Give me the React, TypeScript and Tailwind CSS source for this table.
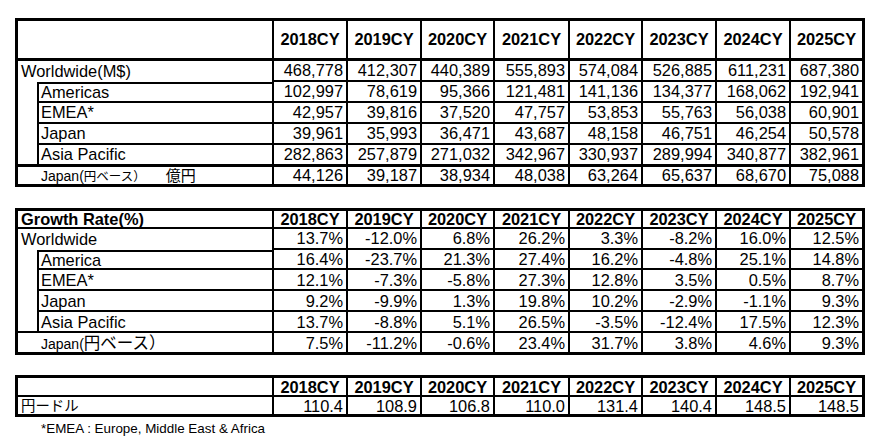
import React from "react";

type Row = {
    label: React.ReactNode;
    kind: "top" | "sub" | "yen" | "plain";
    values: string[];
    h: string;
    sep: string;
    labelTop?: boolean;
    indentB?: boolean;
};

const years = ["2018CY", "2019CY", "2020CY", "2021CY", "2022CY", "2023CY", "2024CY", "2025CY"];
const colW = ["w-[21px]", "w-[235px]", "w-[74px]", "w-[74px]", "w-[73px]", "w-[75px]", "w-[73px]", "w-[74px]", "w-[74px]", "w-[71px]"];

const sales: Row[] = [
    { label: "Worldwide(M$)", kind: "top", values: ["468,778", "412,307", "440,389", "555,893", "574,084", "526,885", "611,231", "687,380"], h: "h-[21px]", sep: "border-b-2" },
    { label: "Americas", kind: "sub", labelTop: true, values: ["102,997", "78,619", "95,366", "121,481", "141,136", "134,377", "168,062", "192,941"], h: "h-[21px]", sep: "border-b-2" },
    { label: "EMEA*", kind: "sub", values: ["42,957", "39,816", "37,520", "47,757", "53,853", "55,763", "56,038", "60,901"], h: "h-[21px]", sep: "border-b-2" },
    { label: "Japan", kind: "sub", values: ["39,961", "35,993", "36,471", "43,687", "48,158", "46,751", "46,254", "50,578"], h: "h-[21px]", sep: "border-b-2" },
    { label: "Asia Pacific", kind: "sub", indentB: true, values: ["282,863", "257,879", "271,032", "342,967", "330,937", "289,994", "340,877", "382,961"], h: "h-[22px]", sep: "border-b-[3px]" },
    {
        label: (
            <>
                <span className="text-[14px]">Japan(</span>
                <span className="text-[12.5px]">円ベース）</span>
                <span className="text-[15px] pl-[20px]">億円</span>
            </>
        ),
        kind: "yen", values: ["44,126", "39,187", "38,934", "48,038", "63,264", "65,637", "68,670", "75,088"], h: "h-[16px]", sep: ""
    },
];

const growth: Row[] = [
    { label: "Worldwide", kind: "top", values: ["13.7%", "-12.0%", "6.8%", "26.2%", "3.3%", "-8.2%", "16.0%", "12.5%"], h: "h-[21px]", sep: "border-b-2" },
    { label: "America", kind: "sub", labelTop: true, values: ["16.4%", "-23.7%", "21.3%", "27.4%", "16.2%", "-4.8%", "25.1%", "14.8%"], h: "h-[20px]", sep: "border-b-2" },
    { label: "EMEA*", kind: "sub", values: ["12.1%", "-7.3%", "-5.8%", "27.3%", "12.8%", "3.5%", "0.5%", "8.7%"], h: "h-[21px]", sep: "border-b-2" },
    { label: "Japan", kind: "sub", values: ["9.2%", "-9.9%", "1.3%", "19.8%", "10.2%", "-2.9%", "-1.1%", "9.3%"], h: "h-[21px]", sep: "border-b-2" },
    { label: "Asia Pacific", kind: "sub", indentB: true, values: ["13.7%", "-8.8%", "5.1%", "26.5%", "-3.5%", "-12.4%", "17.5%", "12.3%"], h: "h-[21px]", sep: "border-b-2" },
    {
        label: (
            <>
                <span className="text-[14px]">Japan(</span>
                <span className="text-[16.5px]">円ベース）</span>
            </>
        ),
        kind: "yen", values: ["7.5%", "-11.2%", "-0.6%", "23.4%", "31.7%", "3.8%", "4.6%", "9.3%"], h: "h-[19px]", sep: ""
    },
];

const fx: Row[] = [
    { label: "円ードル", kind: "plain", values: ["110.4", "108.9", "106.8", "110.0", "131.4", "140.4", "148.5", "148.5"], h: "h-[17px]", sep: "" },
];

const DataTable: React.FC<{ title?: string; headH: string; headSep: string; rows: Row[]; className?: string }> = ({ title, headH, headSep, rows, className }) => {
    return (
        <table className={`table-fixed border-separate border-spacing-0 border-[3px] border-black w-[850px] ${className ?? ""}`}>
            <colgroup>
                {colW.map((w, i) => <col key={i} className={w} />)}
            </colgroup>
            <tbody>
                <tr className={headH}>
                    <td colSpan={2} className={`${headSep} border-r-2 border-black pl-[3px] text-left font-bold align-middle`}>{title}</td>
                    {years.map((y, i) => (
                        <td key={y} className={`${headSep} ${i < 7 ? "border-r-2" : ""} border-black text-center font-bold align-middle`}>{y}</td>
                    ))}
                </tr>
                {rows.map((r, idx) => (
                    <tr key={idx} className={r.h}>
                        {r.kind === "top" || r.kind === "plain" ? (
                            <td colSpan={2} className={`${r.kind === "plain" ? "text-[14.4px]" : ""} border-r-2 border-black pl-[3px] whitespace-nowrap align-middle`}>{r.label}</td>
                        ) : (
                            <>
                                <td className={`${r.kind === "sub" ? "border-r-2" : ""} ${r.indentB ? r.sep : ""} border-black`}></td>
                                <td className={`${r.sep} ${r.labelTop ? "border-t-2" : ""} border-r-2 border-black pl-[2px] whitespace-nowrap align-middle`}>{r.label}</td>
                            </>
                        )}
                        {r.values.map((v, i) => (
                            <td key={i} className={`${r.sep} ${i < 7 ? "border-r-2" : ""} border-black pr-[3px] text-right align-middle`}>{v}</td>
                        ))}
                    </tr>
                ))}
            </tbody>
        </table>
    );
};

export default function App() {
    return (
        <div className="w-[875px] h-[440px] bg-white overflow-hidden pt-[18px] pl-[15px] text-black text-[16.4px] leading-none font-['Liberation_Sans','Noto_Sans_CJK_JP',sans-serif]">
            <DataTable headH="h-[40px]" headSep="border-b-[3px]" rows={sales} />
            <DataTable title="Growth Rate(%)" headH="h-[18px]" headSep="border-b-2" rows={growth} className="mt-[21px]" />
            <DataTable headH="h-[19px]" headSep="border-b-2" rows={fx} className="mt-[20px]" />
            <p className="mt-[4px] pl-[26px] text-[13.4px] leading-[15px]">*EMEA : Europe, Middle East &amp; Africa</p>
        </div>
    );
}
